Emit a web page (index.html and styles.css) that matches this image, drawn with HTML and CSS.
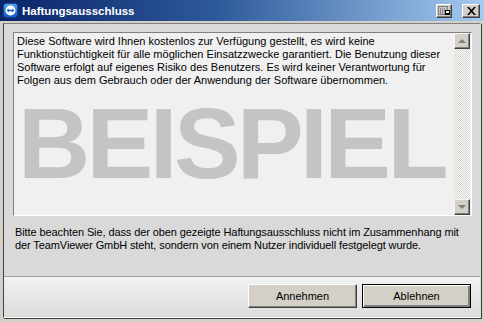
FILE: index.html
```html
<!DOCTYPE html>
<html lang="de">
<head>
<meta charset="utf-8">
<title>Haftungsausschluss</title>
<link rel="stylesheet" href="styles.css">
</head>
<body>
<div class="window">
  <div class="titlebar">
    <svg class="app-icon" width="15" height="15" viewBox="0 0 15 15">
      <defs>
        <linearGradient id="tvbg" x1="0" y1="0" x2="0" y2="1">
          <stop offset="0" stop-color="#5aa7f0"/>
          <stop offset="1" stop-color="#0e5cc4"/>
        </linearGradient>
      </defs>
      <rect x="0.5" y="0.5" width="14" height="14" rx="3" fill="url(#tvbg)" stroke="#0b3f8c" stroke-width="0.6"/>
      <circle cx="7.5" cy="7.5" r="5" fill="#fff"/>
      <path d="M3.6 7.5 L5.8 5.4 L5.8 6.7 L9.2 6.7 L9.2 5.4 L11.4 7.5 L9.2 9.6 L9.2 8.3 L5.8 8.3 L5.8 9.6 Z" fill="#0e5cc4"/>
    </svg>
    <span class="title">Haftungsausschluss</span>
    <div class="caption-buttons">
      <div class="cap-btn">
        <svg width="12" height="10" viewBox="0 0 12 10">
          <rect x="0.5" y="0.5" width="9" height="8" fill="#c8c8c8" stroke="#808080"/>
          <line x1="2.5" y1="2" x2="2.5" y2="8" stroke="#8a8a8a"/>
          <line x1="4.5" y1="2" x2="4.5" y2="8" stroke="#8a8a8a"/>
          <line x1="6.5" y1="2" x2="6.5" y2="8" stroke="#8a8a8a"/>
          <rect x="7" y="4" width="5" height="5" fill="#000"/>
          <rect x="8" y="5" width="3" height="2" fill="#fff"/>
        </svg>
      </div>
      <div class="cap-btn close">
        <svg width="9" height="8" viewBox="0 0 9 8">
          <path d="M0 0 L2 0 L4.5 2.7 L7 0 L9 0 L5.5 4 L9 8 L7 8 L4.5 5.3 L2 8 L0 8 L3.5 4 Z" fill="#000"/>
        </svg>
      </div>
    </div>
  </div>
  <div class="client">
    <div class="main">
      <div class="textbox">
        <div class="textbox-content">
          <p class="disclaimer">Diese Software wird Ihnen kostenlos zur Verfügung gestellt, es wird keine<br>Funktionstüchtigkeit für alle möglichen Einsatzzwecke garantiert. Die Benutzung dieser<br>Software erfolgt auf eigenes Risiko des Benutzers. Es wird keiner Verantwortung für<br>Folgen aus dem Gebrauch oder der Anwendung der Software übernommen.</p>
          <div class="watermark">BEISPIEL</div>
        </div>
        <div class="scrollbar">
          <div class="sb-btn"><span class="arrow up"></span></div>
          <div class="sb-track"></div>
          <div class="sb-btn"><span class="arrow down"></span></div>
        </div>
      </div>
      <p class="note">Bitte beachten Sie, dass der oben gezeigte Haftungsausschluss nicht im Zusammenhang mit<br>der TeamViewer GmbH steht, sondern von einem Nutzer individuell festgelegt wurde.</p>
    </div>
    <div class="footer">
      <button class="btn">Annehmen</button>
      <button class="btn default">Ablehnen</button>
    </div>
  </div>
</div>
</body>
</html>
```

FILE: styles.css
```css
html, body {
  margin: 0;
  padding: 0;
  background: #d4d0c8;
}

.window {
  width: 484px;
  height: 322px;
  box-sizing: border-box;
  background: #d4d0c8;
  display: flex;
  flex-direction: column;
  padding: 0 3px 4px 3px;
  font-family: "Liberation Sans", Arial, sans-serif;
  font-size: 11px;
  color: #000;
}

.titlebar {
  height: 21px;
  flex: none;
  margin: 0 -3px;
  background: linear-gradient(to right, #0a246a 0%, #2d5a9a 45%, #a6caf0 100%);
  display: flex;
  align-items: center;
  padding-left: 3px;
  box-sizing: border-box;
}

.app-icon {
  display: block;
  flex: none;
}

.title {
  color: #fff;
  font-weight: bold;
  font-size: 11.5px;
  margin-left: 4px;
}

.caption-buttons {
  margin-left: auto;
  display: flex;
  gap: 10px;
  margin-right: 4px;
}

.cap-btn {
  width: 16px;
  height: 14px;
  box-sizing: border-box;
  background: #d4d0c8;
  border-top: 1px solid #fff;
  border-left: 1px solid #fff;
  border-right: 1px solid #404040;
  border-bottom: 1px solid #404040;
  box-shadow: inset -1px -1px 0 #808080;
  display: flex;
  align-items: center;
  justify-content: center;
}

.cap-btn.close {
  width: 18px;
}

.client {
  flex: 1;
  margin-top: 2px;
  display: flex;
  flex-direction: column;
  border-left: 1px solid #404040;
  border-top: 1px solid #808080;
  border-right: 1px solid #d8d8d8;
  border-bottom: 1px solid #ffffff;
  background: #d9d9d9;
  box-shadow: 1px 1px 0 #404040;
}

.main {
  flex: 1;
  padding: 8px 8px 0 9px;
  display: flex;
  flex-direction: column;
}

.textbox {
  height: 184px;
  box-sizing: border-box;
  background: #f0f0f0;
  border-top: 1px solid #808080;
  border-left: 1px solid #808080;
  border-right: 1px solid #fff;
  border-bottom: 1px solid #fff;
  display: flex;
}

.textbox-content {
  flex: 1;
  padding: 2px 3px;
  overflow: hidden;
}

.disclaimer {
  margin: 0;
  line-height: 13px;
  white-space: nowrap;
}

.watermark {
  font-family: "Liberation Sans", Arial, sans-serif;
  font-weight: bold;
  font-size: 100px;
  line-height: 100px;
  color: #c4c4c4;
  letter-spacing: -3.6px;
  margin-top: 6px;
  margin-left: 1px;
}

.scrollbar {
  width: 16px;
  display: flex;
  flex-direction: column;
  margin-right: 1px;
}

.sb-btn {
  height: 16px;
  box-sizing: border-box;
  background: #d4d0c8;
  border-top: 1px solid #f4f4f4;
  border-left: 1px solid #f4f4f4;
  border-right: 1px solid #404040;
  border-bottom: 1px solid #404040;
  box-shadow: inset -1px -1px 0 #808080;
  display: flex;
  align-items: center;
  justify-content: center;
}

.arrow {
  width: 0;
  height: 0;
  border-left: 4px solid transparent;
  border-right: 4px solid transparent;
}

.arrow.up {
  border-bottom: 4px solid #808080;
}

.arrow.down {
  border-top: 4px solid #808080;
}

.sb-track {
  flex: 1;
  background-color: #ffffff;
  background-image: repeating-conic-gradient(#d4d0c8 0 25%, #ffffff 0 50%);
  background-size: 2px 2px;
}

.note {
  margin: 10px 0 0 2px;
  line-height: 13px;
  letter-spacing: -0.1px;
  white-space: nowrap;
}

.footer {
  height: 41px;
  flex: none;
  border-top: 1px solid #a0a0a0;
  background: linear-gradient(to bottom, #f2f2f2, #dcdcdc);
  display: flex;
  justify-content: flex-end;
  align-items: flex-start;
  padding: 7px 9px 0 0;
  gap: 5px;
  box-sizing: border-box;
}

.btn {
  width: 109px;
  height: 24px;
  box-sizing: border-box;
  font-family: "Liberation Sans", Arial, sans-serif;
  font-size: 11px;
  color: #000;
  background: #d4d0c8;
  border-top: 1px solid #fff;
  border-left: 1px solid #fff;
  border-right: 1px solid #404040;
  border-bottom: 1px solid #404040;
  box-shadow: inset -1px -1px 0 #808080;
  padding: 0;
  margin: 0;
}

.btn.default {
  border: 1px solid #000;
  box-shadow: inset 1px 1px 0 #fff, inset -2px -2px 0 #808080;
}
```
